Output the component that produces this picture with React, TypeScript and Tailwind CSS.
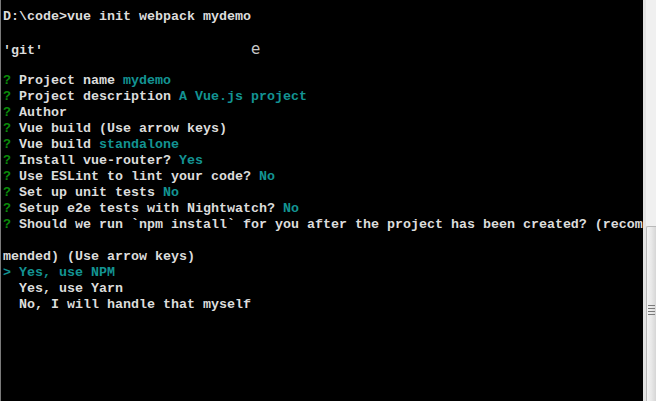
import React from 'react';

type Part = { text: string; tone?: 'q' | 'a' | 'ghost' };

const lines: Part[][] = [
  [{ text: 'D:\\code>vue init webpack mydemo' }],
  [],
  [{ text: "'git'                          " }, { text: 'e', tone: 'ghost' }],
  [],
  [{ text: '? ', tone: 'q' }, { text: 'Project name ' }, { text: 'mydemo', tone: 'a' }],
  [{ text: '? ', tone: 'q' }, { text: 'Project description ' }, { text: 'A Vue.js project', tone: 'a' }],
  [{ text: '? ', tone: 'q' }, { text: 'Author' }],
  [{ text: '? ', tone: 'q' }, { text: 'Vue build (Use arrow keys)' }],
  [{ text: '? ', tone: 'q' }, { text: 'Vue build ' }, { text: 'standalone', tone: 'a' }],
  [{ text: '? ', tone: 'q' }, { text: 'Install vue-router? ' }, { text: 'Yes', tone: 'a' }],
  [{ text: '? ', tone: 'q' }, { text: 'Use ESLint to lint your code? ' }, { text: 'No', tone: 'a' }],
  [{ text: '? ', tone: 'q' }, { text: 'Set up unit tests ' }, { text: 'No', tone: 'a' }],
  [{ text: '? ', tone: 'q' }, { text: 'Setup e2e tests with Nightwatch? ' }, { text: 'No', tone: 'a' }],
  [
    { text: '? ', tone: 'q' },
    { text: 'Should we run `npm install` for you after the project has been created? (recom' },
  ],
  [],
  [{ text: 'mended) (Use arrow keys)' }],
  [{ text: '> Yes, use NPM', tone: 'a' }],
  [{ text: '  Yes, use Yarn' }],
  [{ text: '  No, I will handle that myself' }],
];

function Line({ parts }: { parts: Part[] }) {
  return (
    <div className="h-4 leading-4 whitespace-pre">
      {parts.length === 0 ? ' ' : null}
      {parts.map((p, i) => {
        if (p.tone === 'q') return <span key={i} className="text-[#0a8a0a]">{p.text}</span>;
        if (p.tone === 'a') return <span key={i} className="text-[#139393]">{p.text}</span>;
        if (p.tone === 'ghost')
          return (
            <span key={i} className="font-['DejaVu_Sans',sans-serif] font-normal text-[15px] text-[#c8c8c8]">
              {p.text}
            </span>
          );
        return <span key={i}>{p.text}</span>;
      })}
    </div>
  );
}

export default function App() {
  return (
    <div className="flex w-[656px] h-[401px] overflow-hidden bg-black">
      {/* console area */}
      <div className="flex-1 border-l border-[#7a7a7a] pl-[2px] pt-[9px] font-['Liberation_Mono',monospace] font-bold text-[13.33px] text-[#dcdcdc]">
        {lines.map((l, i) => (
          <Line key={i} parts={l} />
        ))}
      </div>

      {/* scrollbar */}
      <div className="w-[13px] flex bg-[#f0f0f0]">
        <div className="w-[3px] bg-[#e3e3e3]" />
        <div className="flex-1 flex flex-col">
          <div className="h-[226px]" />
          <div className="flex-1 border-l border-t border-[#b9b9b9] rounded-tl-[2px] bg-gradient-to-r from-[#f4f4f4] via-[#e8e8e8] to-[#d6d6d6] flex flex-col items-center">
            <div className="h-[78px]" />
            <div className="flex flex-col gap-[2px]">
              <div className="w-[7px] h-px bg-[#7a7a7a]" />
              <div className="w-[7px] h-px bg-[#7a7a7a]" />
              <div className="w-[7px] h-px bg-[#7a7a7a]" />
              <div className="w-[7px] h-px bg-[#7a7a7a]" />
            </div>
          </div>
        </div>
      </div>
    </div>
  );
}
